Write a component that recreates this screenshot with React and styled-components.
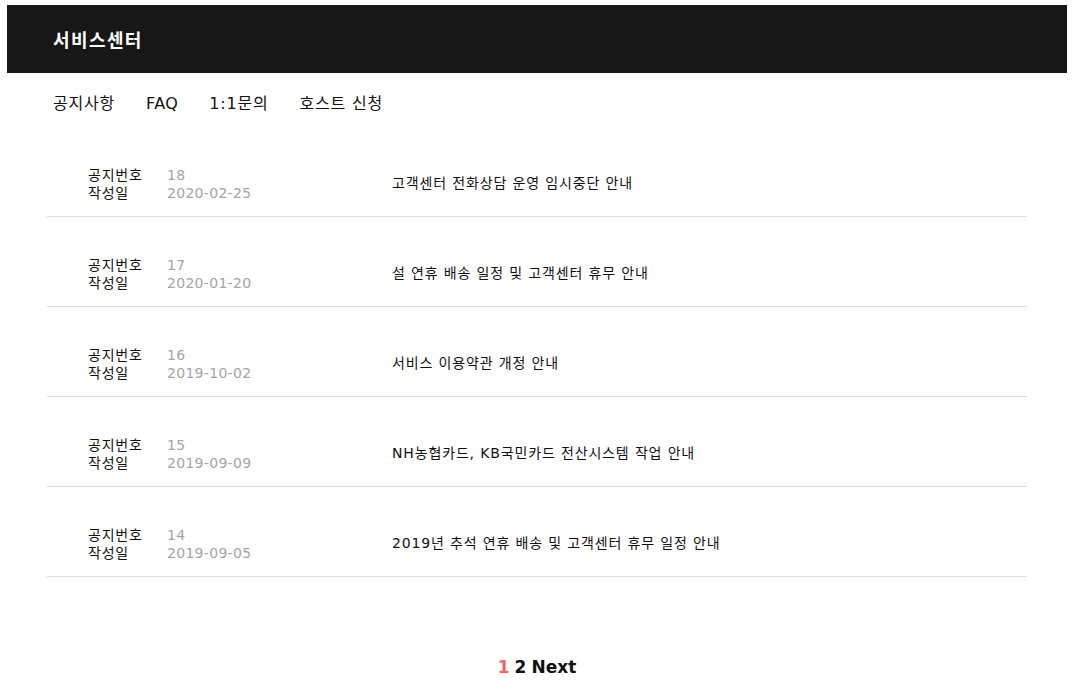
import React from 'react';
import styled, { createGlobalStyle } from 'styled-components';

const GlobalStyle = createGlobalStyle`
  body {
    margin: 0;
    font-family: "DejaVu Sans", "Noto Sans CJK KR", sans-serif;
    color: #111;
    background: #fff;
  }
`;

const Page = styled.div`
  padding: 5px 8px 0 7px;
`;

const Header = styled.header`
  display: flex;
  align-items: center;
  height: 68px;
  padding-left: 46px;
  background-color: #171717;
`;

const Title = styled.h1`
  margin: 0;
  font-size: 18px;
  font-weight: bold;
  letter-spacing: 1.4px;
  color: #fff;
`;

const Nav = styled.nav`
  display: flex;
  align-items: baseline;
  gap: 31px;
  padding: 20px 0 0 46px;
  line-height: 22px;
`;

const NavItem = styled.a`
  font-size: 16px;
  letter-spacing: ${(p) => (p.$latin ? '0.4px' : '0.8px')};
  color: #111;
  text-decoration: none;
  cursor: pointer;
`;

const List = styled.ul`
  list-style: none;
  margin: 12px 40px 0;
  padding: 0;
`;

const Row = styled.li`
  display: flex;
  align-items: center;
  padding: 39px 0 14px 41px;
  border-bottom: 1px solid #ddd;
  font-size: 14px;
  line-height: 18px;
`;

const Meta = styled.div`
  display: grid;
  grid-template-columns: 79px 146px;
  width: 304px;
`;

const Label = styled.span`
  color: #111;
  letter-spacing: 0.8px;
`;

const Value = styled.span`
  color: #a5a5a5;
  letter-spacing: 0.3px;
`;

const NoticeTitle = styled.span`
  padding-bottom: 3px;
  color: #111;
  letter-spacing: 0.85px;
`;

const Pagination = styled.div`
  display: flex;
  justify-content: center;
  gap: 5px;
  margin-top: 80px;
  font-size: 17px;
  font-weight: bold;
`;

const PageLink = styled.span`
  color: ${(p) => (p.$active ? '#f26464' : '#111')};
  cursor: pointer;
`;

const notices = [
  { no: 18, date: '2020-02-25', title: '고객센터 전화상담 운영 임시중단 안내' },
  { no: 17, date: '2020-01-20', title: '설 연휴 배송 일정 및 고객센터 휴무 안내' },
  { no: 16, date: '2019-10-02', title: '서비스 이용약관 개정 안내' },
  { no: 15, date: '2019-09-09', title: 'NH농협카드, KB국민카드 전산시스템 작업 안내' },
  { no: 14, date: '2019-09-05', title: '2019년 추석 연휴 배송 및 고객센터 휴무 일정 안내' },
];

function App() {
  return (
    <Page>
      <GlobalStyle />
      <Header>
        <Title>서비스센터</Title>
      </Header>
      <Nav>
        <NavItem>공지사항</NavItem>
        <NavItem $latin>FAQ</NavItem>
        <NavItem>1:1문의</NavItem>
        <NavItem>호스트 신청</NavItem>
      </Nav>
      <List>
        {notices.map((n) => (
          <Row key={n.no}>
            <Meta>
              <Label>공지번호</Label>
              <Value>{n.no}</Value>
              <Label>작성일</Label>
              <Value>{n.date}</Value>
            </Meta>
            <NoticeTitle>{n.title}</NoticeTitle>
          </Row>
        ))}
      </List>
      <Pagination>
        <PageLink $active>1</PageLink>
        <PageLink>2</PageLink>
        <PageLink>Next</PageLink>
      </Pagination>
    </Page>
  );
}

export default App;
